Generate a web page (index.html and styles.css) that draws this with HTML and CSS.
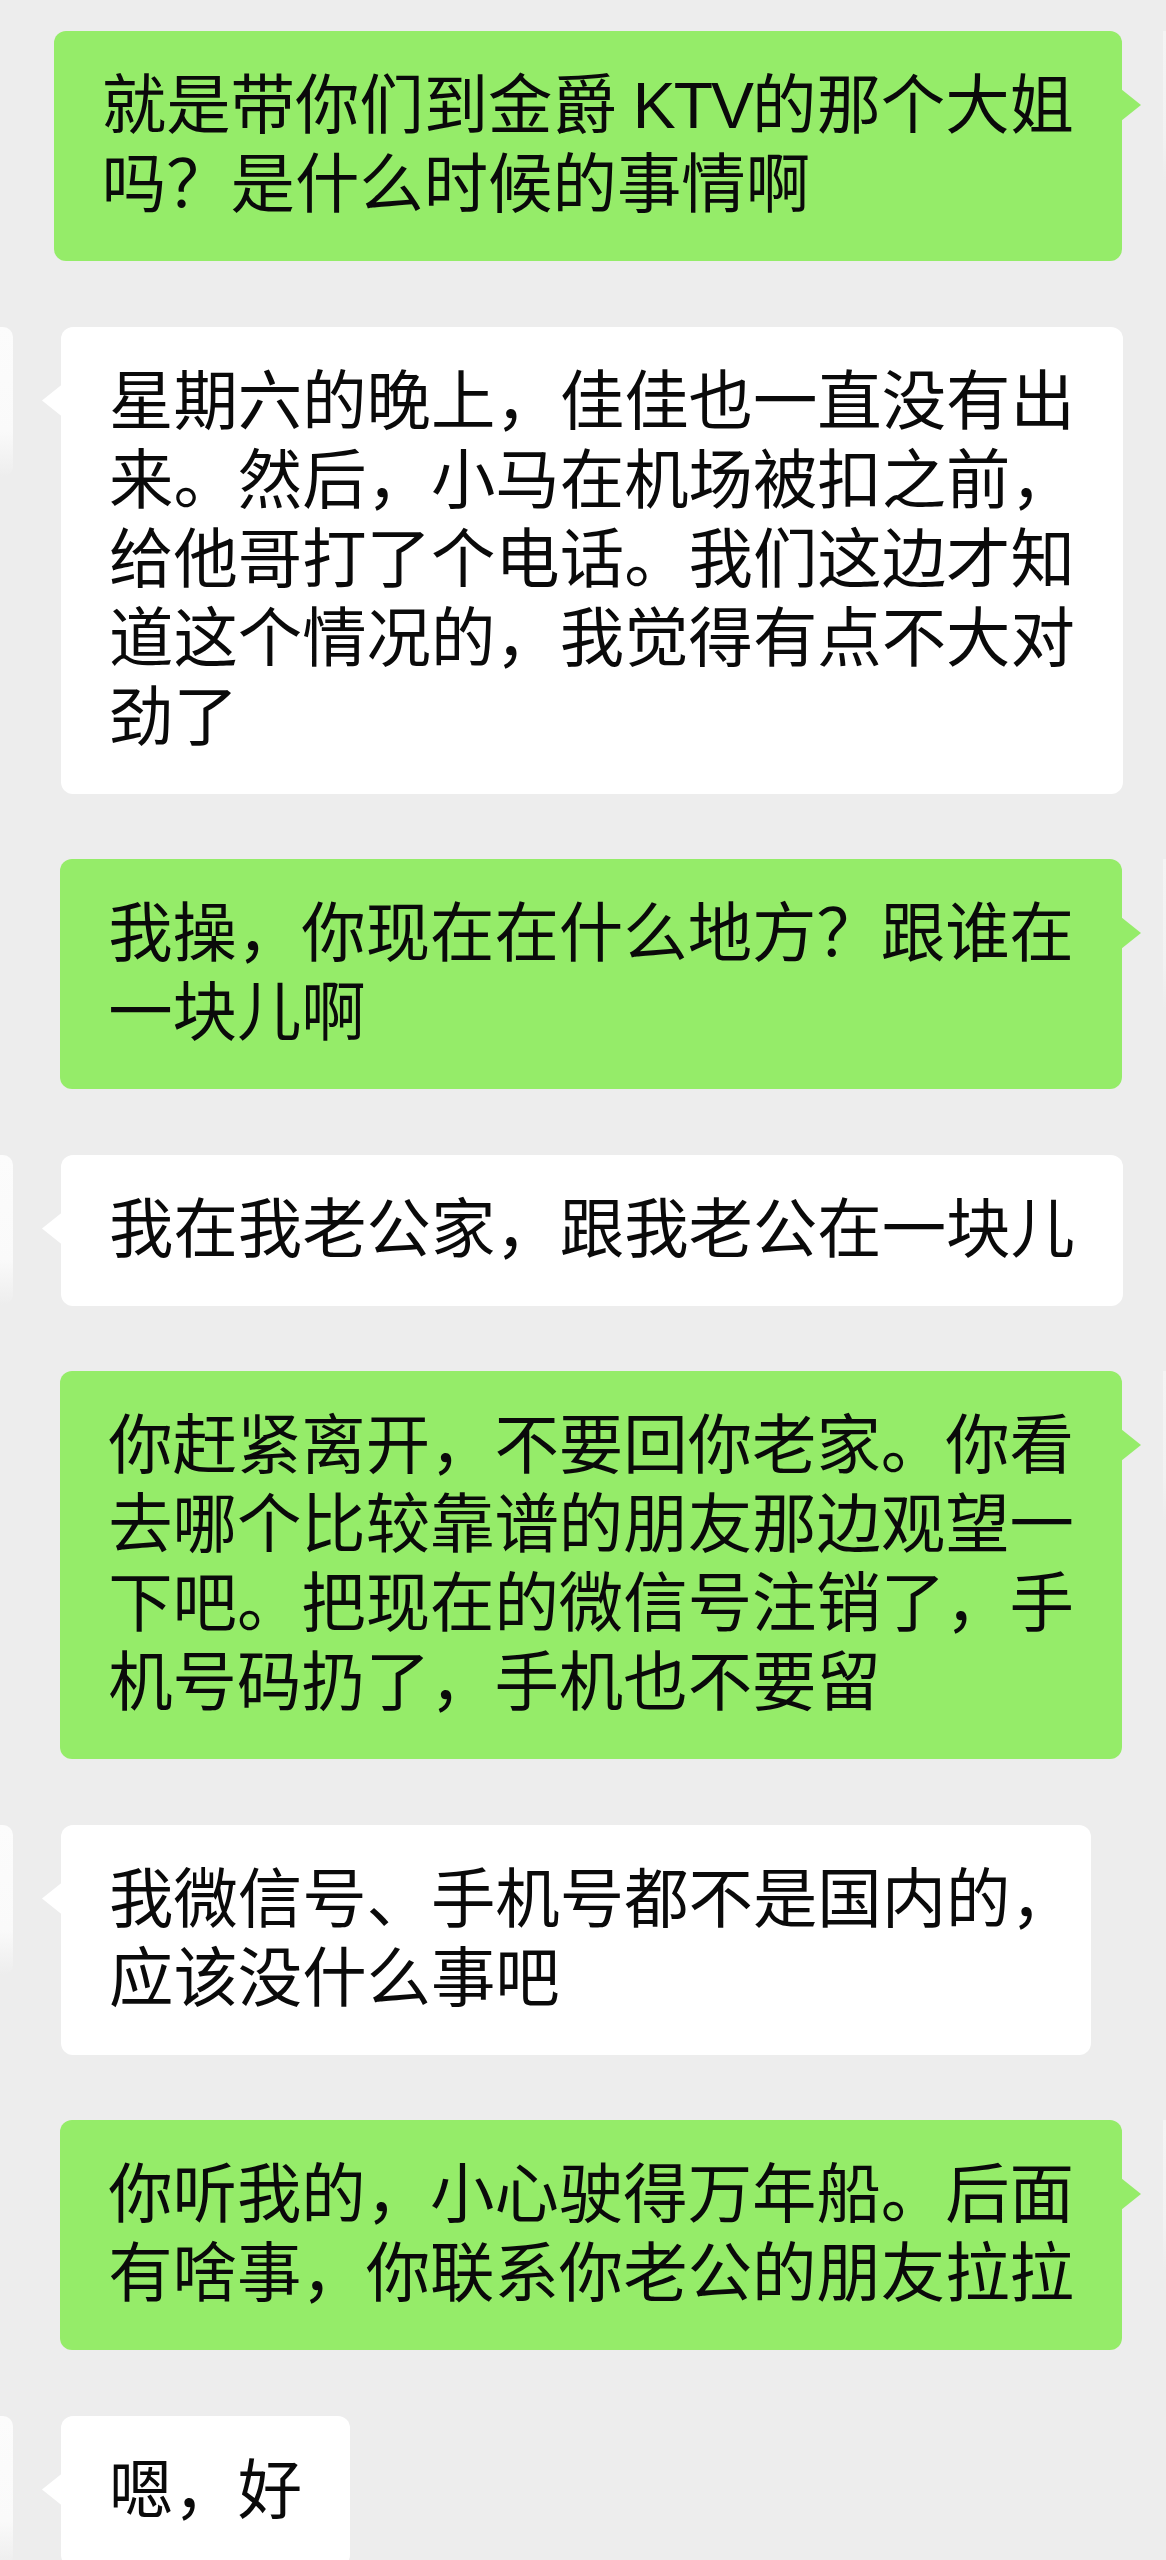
FILE: index.html
```html
<!DOCTYPE html>
<html lang="zh-CN">
<head>
  <meta charset="UTF-8">
  <meta name="viewport" content="width=device-width, initial-scale=1.0">
  <title>聊天记录</title>
  <link rel="stylesheet" href="styles.css">
</head>
<body>
  <div class="chat">
    <div class="row me">
      <div class="bubble">就是带你们到金爵<span class="latin"> KTV</span>的那个大姐<br>吗？是什么时候的事情啊</div>
      <div class="avatar"></div>
    </div>

    <div class="row them">
      <div class="avatar"></div>
      <div class="bubble">星期六的晚上，佳佳也一直没有出<br>来。然后，小马在机场被扣之前，<br>给他哥打了个电话。我们这边才知<br>道这个情况的，我觉得有点不大对<br>劲了</div>
    </div>

    <div class="row me">
      <div class="bubble">我操，你现在在什么地方？跟谁在<br>一块儿啊</div>
      <div class="avatar"></div>
    </div>

    <div class="row them">
      <div class="avatar"></div>
      <div class="bubble">我在我老公家，跟我老公在一块儿</div>
    </div>

    <div class="row me">
      <div class="bubble">你赶紧离开，不要回你老家。你看<br>去哪个比较靠谱的朋友那边观望一<br>下吧。把现在的微信号注销了，手<br>机号码扔了，手机也不要留</div>
      <div class="avatar"></div>
    </div>

    <div class="row them">
      <div class="avatar"></div>
      <div class="bubble">我微信号、手机号都不是国内的<span class="end-punct">，</span><br>应该没什么事吧</div>
    </div>

    <div class="row me">
      <div class="bubble">你听我的，小心驶得万年船。后面<br>有啥事，你联系你老公的朋友拉拉</div>
      <div class="avatar"></div>
    </div>

    <div class="row them">
      <div class="avatar"></div>
      <div class="bubble">嗯，好</div>
    </div>
  </div>
</body>
</html>
```

FILE: styles.css
```css
body {
  margin: 0;
  background-color: #ededed;
  font-family: "Liberation Sans", "Noto Sans CJK SC", sans-serif;
  color: #0a0a0a;
}
.chat {
  display: flex;
  flex-direction: column;
  gap: 65.5px;
  padding-top: 31px;
}
.row {
  display: flex;
  align-items: flex-start;
}
.row.me {
  justify-content: flex-end;
}
.bubble {
  position: relative;
  padding: 36px 48px;
  border-radius: 12px;
  font-size: 64.4px;
  line-height: 79px;
  white-space: nowrap;
}
.bubble::before {
  content: "";
  position: absolute;
  top: 58px;
  width: 20px;
  height: 32px;
}
.me .bubble {
  background-color: #95ec69;
  margin-right: 41px;
}
.me .bubble::before {
  right: -19px;
  background-color: #95ec69;
  clip-path: polygon(0 0, 100% 50%, 0 100%);
}
.them .bubble {
  background-color: #fff;
  margin-left: 48px;
}
.them .bubble::before {
  left: -19px;
  background-color: #fff;
  clip-path: polygon(100% 0, 0 50%, 100% 100%);
}
.avatar {
  flex-shrink: 0;
  height: 150px;
}
.them .avatar {
  width: 13px;
  border-radius: 0 10px 10px 0;
  background: linear-gradient(#fcfcfc, #fafafa 70%, #ededed);
}
.me .avatar {
  width: 3px;
  background: linear-gradient(#f4f4f4, #f2f2f2 70%, #ededed);
}
.latin {
  letter-spacing: -2px;
}
.end-punct {
  letter-spacing: -0.5em;
}
```
